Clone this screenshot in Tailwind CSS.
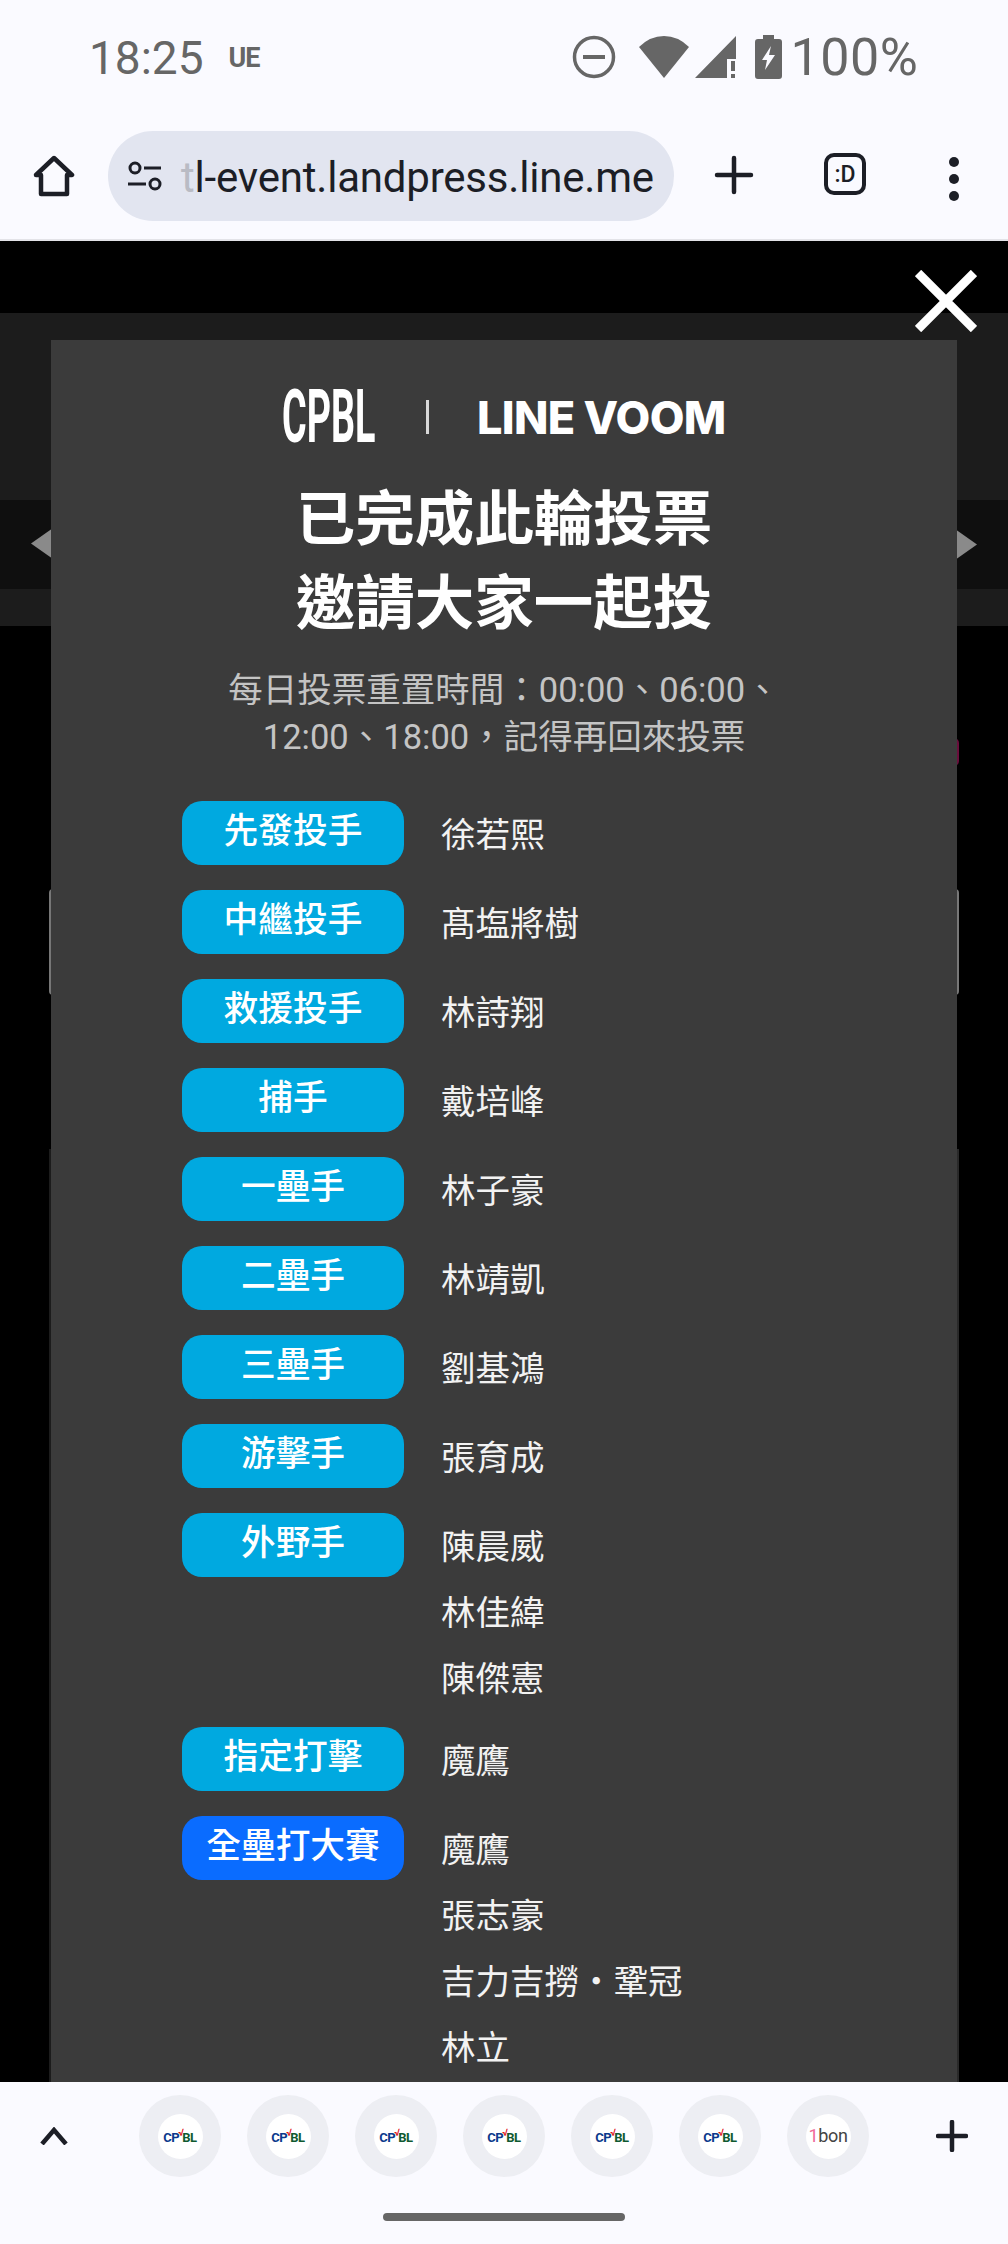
<!DOCTYPE html>
<html lang="zh-Hant">
<head>
    <meta charset="UTF-8" />
    <meta name="viewport" content="width=device-width, initial-scale=1.0">
    <script src="https://cdn.jsdelivr.net/npm/@tailwindcss/browser@4"></script>
    <title>CPBL LINE VOOM</title>
</head>
<body class="bg-black font-['Roboto','Noto_Sans_CJK_TC',sans-serif]">
    <div class="w-[1008px] h-[2244px] flex flex-col overflow-hidden">
        <!-- status bar -->
        <div class="h-[114px] shrink-0 bg-[#fafaff] flex items-center text-[#666666] pl-[89px]">
            <span class="text-[46px] leading-none mt-[2px]">18:25</span>
            <span class="text-[27px] font-bold leading-none ml-[25px] mt-[2px] tracking-[-1px]">UE</span>
            <svg class="ml-[312px]" width="44" height="44" viewBox="0 0 44 44" fill="none">
                <circle cx="22" cy="22" r="19.5" stroke="#666666" stroke-width="3.5" />
                <rect x="11" y="20" width="22" height="4" fill="#666666" />
            </svg>
            <svg class="ml-[22px]" width="52" height="44" viewBox="0 0 52 44">
                <path d="M26 43 L1 12 Q12 1 26 1 Q40 1 51 12 Z" fill="#666666" />
            </svg>
            <svg class="ml-[4px]" width="44" height="44" viewBox="0 0 44 44">
                <path d="M42 1 V24 H33 V43 H1 Z" fill="#666666" />
                <rect x="37" y="26" width="4" height="10" fill="#666666" />
                <rect x="37" y="39" width="4" height="4" fill="#666666" />
            </svg>
            <svg class="ml-[17px]" width="27" height="44" viewBox="0 0 27 44">
                <path d="M8 0 H19 V4 H24 Q27 4 27 7 V41 Q27 44 24 44 H3 Q0 44 0 41 V7 Q0 4 3 4 H8 Z" fill="#666666" />
                <path d="M16 11 L7 25 H12 L10 35 L20 20 H14 Z" fill="#fafaff" />
            </svg>
            <span class="text-[52px] leading-none ml-[9px] mt-[2px] tracking-[0.5px]">100%</span>
        </div>

        <!-- browser toolbar -->
        <div class="h-[127px] shrink-0 bg-[#fafaff] border-b-[2px] border-[#e3e3e8] flex items-start pt-[17px] text-[#1c1e26]">
            <svg class="ml-[33px] mt-[24px]" width="42" height="42" viewBox="0 0 42 42" fill="none" stroke="#1c1e26" stroke-width="4.5" stroke-linejoin="round">
                <path d="M21 3 L39 20 H34 V39 H8 V20 H3 Z" />
            </svg>
            <div class="ml-[33px] w-[566px] h-[90px] rounded-[45px] bg-[#e2e5f0] flex items-center pl-[19px] overflow-hidden">
                <svg width="36" height="30" viewBox="0 0 36 30" fill="none" stroke="#1c1e26" stroke-width="3">
                    <circle cx="8" cy="7" r="5" />
                    <path d="M17 7 H34 M1 23 H19" />
                    <circle cx="28" cy="23" r="5" />
                </svg>
                <span class="ml-[18px] mt-[3px] text-[42px] leading-none tracking-[-0.2px] whitespace-nowrap"><span class="text-[#b9bbc4]">t</span>l-event.landpress.line.me</span>
            </div>
            <svg class="ml-[40px] mt-[24px]" width="40" height="40" viewBox="0 0 40 40" stroke="#1c1e26" stroke-width="4.5" stroke-linecap="round">
                <path d="M20 3 V37 M3 20 H37" />
            </svg>
            <div class="ml-[70px] mt-[22px] w-[42px] h-[42px] rounded-[10px] border-[4.5px] border-[#1c1e26] flex items-center justify-center text-[23px] font-medium leading-none">:D</div>
            <div class="ml-[83px] mt-[26px] flex flex-col gap-[7px]">
                <span class="w-[10px] h-[10px] rounded-full bg-[#1c1e26]"></span>
                <span class="w-[10px] h-[10px] rounded-full bg-[#1c1e26]"></span>
                <span class="w-[10px] h-[10px] rounded-full bg-[#1c1e26]"></span>
            </div>
        </div>

        <!-- page under the popup -->
        <div class="relative flex-1 min-h-0 bg-black overflow-hidden">
            <div class="mt-[72px] h-[187px] bg-[#1c1c1c]"></div>
            <div class="h-[89px] bg-[#0f0f0f]"></div>
            <div class="h-[37px] bg-[#1c1c1c]"></div>

            <!-- bits of the page peeking out from behind -->
            <div class="absolute left-[31px] top-[287px] w-[22px] h-[31px] bg-[#8a8a8a] [clip-path:polygon(0_50%,100%_0,100%_100%)]"></div>
            <div class="absolute left-[955px] top-[288px] w-[22px] h-[31px] bg-[#8a8a8a] [clip-path:polygon(100%_50%,0_0,0_100%)]"></div>
            <div class="absolute left-[49px] top-[648px] w-[4px] h-[106px] rounded-l-[4px] bg-[#777777]"></div>
            <div class="absolute left-[955px] top-[648px] w-[4px] h-[106px] rounded-r-[4px] bg-[#777777]"></div>
            <div class="absolute left-[954px] top-[497px] w-[5px] h-[28px] rounded-r-full bg-[#6a0f3c]"></div>
            <div class="absolute left-[49px] top-[908px] w-[4px] bottom-0 bg-[#1c1c1c]"></div>
            <div class="absolute left-[955px] top-[908px] w-[4px] bottom-0 bg-[#2a2a2a]"></div>

            <!-- close -->
            <svg class="absolute left-[915px] top-[29px]" width="62" height="62" viewBox="0 0 62 62" stroke="#ffffff" stroke-width="9">
                <path d="M3 3 L59 59 M59 3 L3 59" />
            </svg>

            <!-- popup -->
            <div class="absolute left-[51px] top-[99px] w-[906px] bottom-0 bg-[#3b3b3b] text-white overflow-hidden">
                <div class="h-[46px] mt-[54px] flex items-center">
                    <span class="ml-[231px] w-[95px] text-[74px] font-bold leading-none origin-left scale-x-[0.51] whitespace-nowrap font-['Roboto']">CPBL</span>
                    <span class="ml-[49px] w-[3px] h-[34px] bg-[#d8d8d8]"></span>
                    <span class="ml-[48px] text-[45px] font-extrabold leading-none tracking-[-0.7px] whitespace-nowrap font-['Inter']">LINE VOOM</span>
                </div>
                <h1 class="mt-[38px] text-center text-[59.5px] font-bold leading-[84px]">已完成此輪投票<br>邀請大家一起投</h1>
                <p class="mt-[21px] text-center text-[34.5px] leading-[47px] text-[#c4c4c4]">每日投票重置時間：00:00、06:00、<br>12:00、18:00，記得再回來投票</p>

                <div class="mt-[40px] pl-[131px] flex flex-col gap-[25px]">
                    <div class="flex">
                        <div class="w-[222px] h-[64px] pb-[4px] rounded-[20px] bg-[#00a9e0] flex items-center justify-center text-[34.7px] font-medium">先發投手</div>
                        <div class="ml-[37px] mt-[11px] flex flex-col gap-[20px] text-[34.5px] text-[#f2f2f2] [&>span]:h-[46px] [&>span]:leading-[46px]"><span>徐若熙</span></div>
                    </div>
                    <div class="flex">
                        <div class="w-[222px] h-[64px] pb-[4px] rounded-[20px] bg-[#00a9e0] flex items-center justify-center text-[34.7px] font-medium">中繼投手</div>
                        <div class="ml-[37px] mt-[11px] flex flex-col gap-[20px] text-[34.5px] text-[#f2f2f2] [&>span]:h-[46px] [&>span]:leading-[46px]"><span>髙塩將樹</span></div>
                    </div>
                    <div class="flex">
                        <div class="w-[222px] h-[64px] pb-[4px] rounded-[20px] bg-[#00a9e0] flex items-center justify-center text-[34.7px] font-medium">救援投手</div>
                        <div class="ml-[37px] mt-[11px] flex flex-col gap-[20px] text-[34.5px] text-[#f2f2f2] [&>span]:h-[46px] [&>span]:leading-[46px]"><span>林詩翔</span></div>
                    </div>
                    <div class="flex">
                        <div class="w-[222px] h-[64px] pb-[4px] rounded-[20px] bg-[#00a9e0] flex items-center justify-center text-[34.7px] font-medium">捕手</div>
                        <div class="ml-[37px] mt-[11px] flex flex-col gap-[20px] text-[34.5px] text-[#f2f2f2] [&>span]:h-[46px] [&>span]:leading-[46px]"><span>戴培峰</span></div>
                    </div>
                    <div class="flex">
                        <div class="w-[222px] h-[64px] pb-[4px] rounded-[20px] bg-[#00a9e0] flex items-center justify-center text-[34.7px] font-medium">一壘手</div>
                        <div class="ml-[37px] mt-[11px] flex flex-col gap-[20px] text-[34.5px] text-[#f2f2f2] [&>span]:h-[46px] [&>span]:leading-[46px]"><span>林子豪</span></div>
                    </div>
                    <div class="flex">
                        <div class="w-[222px] h-[64px] pb-[4px] rounded-[20px] bg-[#00a9e0] flex items-center justify-center text-[34.7px] font-medium">二壘手</div>
                        <div class="ml-[37px] mt-[11px] flex flex-col gap-[20px] text-[34.5px] text-[#f2f2f2] [&>span]:h-[46px] [&>span]:leading-[46px]"><span>林靖凱</span></div>
                    </div>
                    <div class="flex">
                        <div class="w-[222px] h-[64px] pb-[4px] rounded-[20px] bg-[#00a9e0] flex items-center justify-center text-[34.7px] font-medium">三壘手</div>
                        <div class="ml-[37px] mt-[11px] flex flex-col gap-[20px] text-[34.5px] text-[#f2f2f2] [&>span]:h-[46px] [&>span]:leading-[46px]"><span>劉基鴻</span></div>
                    </div>
                    <div class="flex">
                        <div class="w-[222px] h-[64px] pb-[4px] rounded-[20px] bg-[#00a9e0] flex items-center justify-center text-[34.7px] font-medium">游擊手</div>
                        <div class="ml-[37px] mt-[11px] flex flex-col gap-[20px] text-[34.5px] text-[#f2f2f2] [&>span]:h-[46px] [&>span]:leading-[46px]"><span>張育成</span></div>
                    </div>
                    <div class="flex">
                        <div class="w-[222px] h-[64px] pb-[4px] rounded-[20px] bg-[#00a9e0] flex items-center justify-center text-[34.7px] font-medium">外野手</div>
                        <div class="ml-[37px] mt-[11px] flex flex-col gap-[20px] text-[34.5px] text-[#f2f2f2] [&>span]:h-[46px] [&>span]:leading-[46px]"><span>陳晨威</span><span>林佳緯</span><span>陳傑憲</span></div>
                    </div>
                    <div class="flex">
                        <div class="w-[222px] h-[64px] pb-[4px] rounded-[20px] bg-[#00a9e0] flex items-center justify-center text-[34.7px] font-medium">指定打擊</div>
                        <div class="ml-[37px] mt-[11px] flex flex-col gap-[20px] text-[34.5px] text-[#f2f2f2] [&>span]:h-[46px] [&>span]:leading-[46px]"><span>魔鷹</span></div>
                    </div>
                    <div class="flex">
                        <div class="w-[222px] h-[64px] pb-[4px] rounded-[20px] bg-[#0a6cff] flex items-center justify-center text-[34.7px] font-medium">全壘打大賽</div>
                        <div class="ml-[37px] mt-[11px] flex flex-col gap-[20px] text-[34.5px] text-[#f2f2f2] [&>span]:h-[46px] [&>span]:leading-[46px]"><span>魔鷹</span><span>張志豪</span><span>吉力吉撈・鞏冠</span><span>林立</span></div>
                    </div>
                </div>
            </div>
        </div>

        <!-- tab strip -->
        <div class="h-[162px] shrink-0 bg-[#fafaff] relative">
            <div class="flex items-center h-[82px] mt-[13px]">
                <svg class="ml-[40px]" width="28" height="18" viewBox="0 0 28 18" fill="none" stroke="#1c1e26" stroke-width="4.5">
                    <path d="M2 17 L14 3 L26 17" />
                </svg>
                <div class="ml-[71px] flex gap-[26px]">
                    <div class="w-[82px] h-[82px] rounded-full bg-[#edeef3] flex items-center justify-center"><div class="w-[45px] h-[45px] rounded-full bg-white flex items-center justify-center text-[13px] font-bold leading-none tracking-[-0.5px] pt-[3px]"><span class="text-[#0b3a8c]">CP</span><span class="text-[#e01020] -mt-[10px] -mx-[1px] text-[10px]">√</span><span class="text-[#0f5a30]">BL</span></div></div>
                    <div class="w-[82px] h-[82px] rounded-full bg-[#edeef3] flex items-center justify-center"><div class="w-[45px] h-[45px] rounded-full bg-white flex items-center justify-center text-[13px] font-bold leading-none tracking-[-0.5px] pt-[3px]"><span class="text-[#0b3a8c]">CP</span><span class="text-[#e01020] -mt-[10px] -mx-[1px] text-[10px]">√</span><span class="text-[#0f5a30]">BL</span></div></div>
                    <div class="w-[82px] h-[82px] rounded-full bg-[#edeef3] flex items-center justify-center"><div class="w-[45px] h-[45px] rounded-full bg-white flex items-center justify-center text-[13px] font-bold leading-none tracking-[-0.5px] pt-[3px]"><span class="text-[#0b3a8c]">CP</span><span class="text-[#e01020] -mt-[10px] -mx-[1px] text-[10px]">√</span><span class="text-[#0f5a30]">BL</span></div></div>
                    <div class="w-[82px] h-[82px] rounded-full bg-[#edeef3] flex items-center justify-center"><div class="w-[45px] h-[45px] rounded-full bg-white flex items-center justify-center text-[13px] font-bold leading-none tracking-[-0.5px] pt-[3px]"><span class="text-[#0b3a8c]">CP</span><span class="text-[#e01020] -mt-[10px] -mx-[1px] text-[10px]">√</span><span class="text-[#0f5a30]">BL</span></div></div>
                    <div class="w-[82px] h-[82px] rounded-full bg-[#edeef3] flex items-center justify-center"><div class="w-[45px] h-[45px] rounded-full bg-white flex items-center justify-center text-[13px] font-bold leading-none tracking-[-0.5px] pt-[3px]"><span class="text-[#0b3a8c]">CP</span><span class="text-[#e01020] -mt-[10px] -mx-[1px] text-[10px]">√</span><span class="text-[#0f5a30]">BL</span></div></div>
                    <div class="w-[82px] h-[82px] rounded-full bg-[#edeef3] flex items-center justify-center"><div class="w-[45px] h-[45px] rounded-full bg-white flex items-center justify-center text-[13px] font-bold leading-none tracking-[-0.5px] pt-[3px]"><span class="text-[#0b3a8c]">CP</span><span class="text-[#e01020] -mt-[10px] -mx-[1px] text-[10px]">√</span><span class="text-[#0f5a30]">BL</span></div></div>
                    <div class="w-[82px] h-[82px] rounded-full bg-[#edeef3] flex items-center justify-center"><div class="w-[45px] h-[45px] rounded-full bg-white flex items-center justify-center text-[18px] leading-none tracking-[-0.3px] text-[#444444]"><span class="text-[#f06a9a]">1</span>bon</div></div>
                </div>
                <svg class="ml-[67px]" width="32" height="32" viewBox="0 0 32 32" stroke="#1c1e26" stroke-width="4.5" stroke-linecap="round">
                    <path d="M16 2 V30 M2 16 H30" />
                </svg>
            </div>
            <div class="absolute left-[383px] top-[131px] w-[242px] h-[8px] rounded-full bg-[#666666]"></div>
        </div>
    </div>
</body>
</html>
